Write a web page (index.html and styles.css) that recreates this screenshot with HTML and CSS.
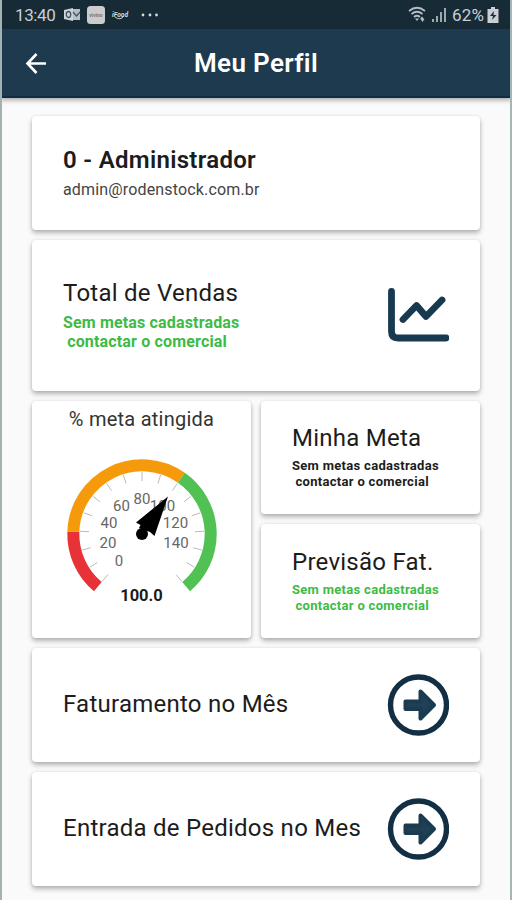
FILE: index.html
```html
<!DOCTYPE html>
<html lang="pt-br">
<head>
    <meta charset="UTF-8">
    <meta name="viewport" content="width=device-width, initial-scale=1.0">
    <title>Meu Perfil</title>
    <link rel="stylesheet" href="styles.css">
</head>
<body>
    <div class="status-bar">
        <span class="hora">13:40</span>
        <svg class="notificacoes" width="100" height="28" viewBox="0 0 100 28">
            <path d="M6 8h10v11H6z" fill="#b5c0c6"/>
            <path d="M0 9l9-2v13l-9-2z" fill="#ccd3d7"/>
            <ellipse cx="4.5" cy="13.500" rx="2.2" ry="3" fill="none" stroke="#42545e" stroke-width="1.3"/>
            <path d="M9 11l3.500 4 3.500-4" fill="none" stroke="#42545e" stroke-width="1.2"/>
            <rect x="23" y="5" width="18" height="18" rx="3.5" fill="#ccc"/>
            <text x="32" y="16" font-size="5" font-weight="700" text-anchor="middle" fill="#777">vivino</text>
            <text x="56" y="16" font-size="8" font-style="italic" font-weight="700" text-anchor="middle" textLength="16" lengthAdjust="spacingAndGlyphs" fill="#d5dadd">iFood</text>
            <path d="M51 16q5 4 9-1" fill="none" stroke="#c5cdd1" stroke-width="1"/>
            <circle cx="79" cy="14" r="1.4" fill="#d5dadd"/>
            <circle cx="86" cy="14" r="1.4" fill="#d5dadd"/>
            <circle cx="92.5" cy="14" r="1.4" fill="#d5dadd"/>
        </svg>
        <svg class="sinal" width="40" height="28" viewBox="0 0 40 28">
            <g fill="none" stroke="#b5bec3" stroke-width="1.7">
                <path d="M1 10q8-6.500 16 0"/>
                <path d="M3.500 13q5.500-4.500 11 0"/>
                <path d="M6 16q3-2.500 6 0"/>
            </g>
            <path d="M7 17.500h4l-2 2.500zM12 18l2-2.500 2 2.500zM12.500 18h4l-2 3z" fill="#b5bec3"/>
            <path d="M25 18v3M29 15v6M33 11v10M37 7v14" stroke="#9da9af" stroke-width="2"/>
        </svg>
        <span class="bateria">62%</span>
        <svg width="12" height="16" viewBox="0 0 12 16">
            <path d="M4 0h4v2h3.500v14H.5V2H4z" fill="#c9cfd2"/>
            <path d="M7 4L3 9h3l-1 4 4.500-5H6.500z" fill="#1a2d38"/>
        </svg>
    </div>

    <div class="header">
        <svg class="voltar" width="22" height="22" viewBox="0 0 22 22">
            <path d="M21 11.500H3M11.500 2L2.500 11.500l9 9.500" fill="none" stroke="#fff" stroke-width="2.600"/>
        </svg>
        <h1>Meu Perfil</h1>
    </div>

    <div class="container">
        <div class="card usuario">
            <h2>0 - Administrador</h2>
            <p>admin@rodenstock.com.br</p>
        </div>

        <div class="card vendas">
            <div>
                <h3>Total de Vendas</h3>
                <p class="aviso verde">Sem metas cadastradas<br>&nbsp;contactar o comercial</p>
            </div>
            <svg class="icone" width="62" height="54" viewBox="0 0 62 54">
                <path d="M4.500 3.500v40q0 6.500 6.500 6.500h48M16 31.500l13.500-14 9.500 11L55 12" fill="none" stroke="#173a50" stroke-width="6.800" stroke-linecap="round" stroke-linejoin="round"/>
            </svg>
        </div>

        <div class="metas">
            <div class="card medidor">
                <h4>% meta atingida</h4>
                <svg width="160" height="160" viewBox="-80 -80 160 160">
                    <g id="arcos" fill="none" stroke-width="12"></g>
                    <g id="marcas" stroke="#bbb" stroke-width="1"></g>
                    <g class="numeros">
                        <text x="-23" y="32">0</text>
                        <text x="-34" y="14">20</text>
                        <text x="-33" y="-6">40</text>
                        <text x="-20.500" y="-23.500">60</text>
                        <text x="0" y="-30">80</text>
                        <text x="20.500" y="-23.500">100</text>
                        <text x="33.500" y="-6">120</text>
                        <text x="34" y="14">140</text>
                    </g>
                    <path d="M26 -37.500L-6 -11.500L-1.500 -9L-3 -6L8 -2L12.500 2z"/>
                    <circle cx="0" cy="0" r="6"/>
                    <text class="valor" x="-.5" y="66.500">100.0</text>
                </svg>
            </div>
            <div class="coluna">
                <div class="card meta">
                    <h3>Minha Meta</h3>
                    <p class="aviso">Sem metas cadastradas<br>&nbsp;contactar o comercial</p>
                </div>
                <div class="card meta">
                    <h3>Previsão Fat.</h3>
                    <p class="aviso verde">Sem metas cadastradas<br>&nbsp;contactar o comercial</p>
                </div>
            </div>
        </div>

        <div class="card link">
            <h3>Faturamento no Mês</h3>
            <svg class="icone" width="62" height="62" viewBox="0 0 62 62">
                <circle cx="31.500" cy="31" r="28" fill="none" stroke="#122f44" stroke-width="5.400"/>
                <path d="M18.500 27.500h15V17.500L47 31 33.500 44.500V35h-15z" fill="#1f4055" stroke="#1b3b50" stroke-width="4" stroke-linejoin="round"/>
            </svg>
        </div>

        <div class="card link">
            <h3>Entrada de Pedidos no Mes</h3>
            <svg class="icone" width="62" height="62" viewBox="0 0 62 62">
                <circle cx="31.500" cy="31" r="28" fill="none" stroke="#122f44" stroke-width="5.400"/>
                <path d="M18.500 27.500h15V17.500L47 31 33.500 44.500V35h-15z" fill="#1f4055" stroke="#1b3b50" stroke-width="4" stroke-linejoin="round"/>
            </svg>
        </div>
    </div>

    <script src="script.js"></script>
</body>
</html>
```
FILE: styles.css
```css
* { margin: 0; padding: 0; box-sizing: border-box; }
body { height: 900px; overflow: hidden; background-color: #fafafa; color: #1c1c1c; font-family: Roboto, sans-serif; border-left: 2px solid #a3b1b2; border-right: 2px solid #a3b8b6; }
svg { display: block; flex-shrink: 0; }
.status-bar { display: flex; align-items: center; height: 29px; margin: 0 -2px; padding: 0 11px 0 13px; background-color: #172b37; color: #c9cfd2; border-left: 2px solid #1c4656; border-right: 2px solid #28545d; }
.hora { width: 49px; font-size: 17px; letter-spacing: -0.4px; }
.sinal { margin-left: auto; }
.bateria { width: 35px; margin-left: 4px; font-size: 17px; letter-spacing: 0.2px; }
.header { display: grid; grid-template-columns: 80px 1fr 80px; align-items: center; height: 69px; margin: 0 -2px; background-color: #1e3a4f; color: #fff; border: 2px solid #204c61; border-top: none; border-bottom: 2px solid #112d43; box-shadow: 0 2px 5px rgba(0,0,0,0.35); }
.header h1 { font-size: 26px; font-weight: 600; letter-spacing: 0.35px; text-align: center; }
.voltar { margin-left: 23px; }
.container { display: flex; flex-direction: column; gap: 10px; padding: 17.5px 30px; }
.card { background-color: #fff; border-radius: 4px; box-shadow: 0 3px 5px rgba(0,0,0,0.28), 0 0 3px rgba(0,0,0,0.1); }
h3 { font-size: 24px; font-weight: 400; line-height: 28px; letter-spacing: 0.25px; white-space: nowrap; }
.usuario { height: 114px; padding: 30.5px 31px; }
.usuario h2 { font-size: 24px; font-weight: 600; line-height: 28px; letter-spacing: 0.3px; }
.usuario p { margin-top: 6px; font-size: 16px; line-height: 20px; letter-spacing: 0.16px; color: #444; }
.vendas { display: flex; justify-content: space-between; height: 151px; padding: 39.5px 31px; }
.vendas .icone { margin-top: 9px; }
.aviso { font-weight: 700; white-space: nowrap; }
.vendas .aviso { margin-top: 6px; font-size: 16px; line-height: 19px; letter-spacing: 0.16px; }
.verde { color: #3dbb44; }
.metas { display: grid; grid-template-columns: 1fr 1fr; gap: 10px; height: 237px; }
.coluna { display: grid; grid-template-rows: 1fr 1fr; gap: 10px; }
.medidor { display: flex; flex-direction: column; align-items: center; padding-top: 6.5px; }
.medidor h4 { font-size: 20px; font-weight: 400; line-height: 24px; letter-spacing: 0.25px; color: #333; }
.medidor svg { margin-top: 23px; overflow: visible; }
.numeros text { font-size: 15px; fill: #666; text-anchor: middle; }
.valor { font-size: 16.5px; font-weight: 700; text-anchor: middle; fill: #1c1c1c; }
.meta { padding: 23.5px 31px; }
.meta .aviso { margin-top: 6px; font-size: 13px; line-height: 16px; letter-spacing: 0.3px; }
.link { display: flex; align-items: center; justify-content: space-between; height: 114px; padding: 0 31px; }
.link h3 { margin-top: -1px; }
```
FILE: script.js
```js
function ponto(angulo, raio) {
    const rad = angulo * Math.PI / 180;
    return (raio * Math.cos(rad)).toFixed(2) + ' ' + (raio * Math.sin(rad)).toFixed(2);
}

function criarPath(pai, d, cor) {
    const path = document.createElementNS('http://www.w3.org/2000/svg', 'path');
    path.setAttribute('d', d);
    if (cor) path.setAttribute('stroke', cor);
    document.getElementById(pai).appendChild(path);
}

// faixas do medidor: inicio, fim, cor
const faixas = [[130, 182, '#e73338'], [182, 305, '#f59b0b'], [305, 410, '#50c152']];
faixas.forEach(([inicio, fim, cor]) => {
    criarPath('arcos', `M${ponto(inicio, 68.7)}A68.7 68.7 0 0 1 ${ponto(fim, 68.7)}`, cor);
});

for (let i = 0; i <= 16; i++) {
    const angulo = 130 + i * 17.5;
    criarPath('marcas', `M${ponto(angulo, 62)}L${ponto(angulo, 53)}`);
}
```
